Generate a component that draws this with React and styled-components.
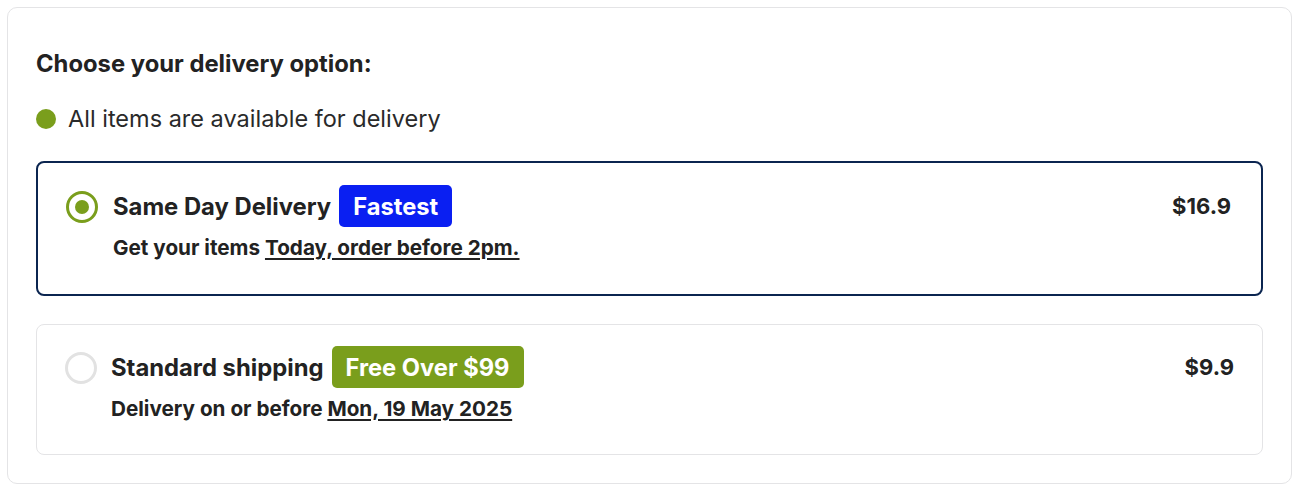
import React, { useState } from "react";
import styled, { createGlobalStyle } from "styled-components";

const Global = createGlobalStyle`
  html, body { margin: 0; padding: 0; background: #ffffff; }
  body { font-family: "Inter", "Lato", "Noto Sans", sans-serif; color: #222222; }
  * { box-sizing: border-box; }
`;

const Page = styled.div`
  padding: 7px 17px 7px 7px;
`;

const Panel = styled.section`
  border: 1px solid #e4e4e6;
  border-radius: 10px;
  padding: 43px 28px 28px 28px;
`;

const Heading = styled.h2`
  margin: 0;
  font-size: 23.8px;
  line-height: 26px;
  font-weight: 700;
  color: #222222;
`;

const Availability = styled.div`
  display: flex;
  align-items: center;
  gap: 12px;
  margin-top: 29px;
  font-size: 23.5px;
  line-height: 26px;
  font-weight: 400;
  color: #2a2a2a;
`;

const Dot = styled.span`
  width: 20px;
  height: 20px;
  border-radius: 50%;
  background: #7a9e1c;
  flex: none;
`;

const Options = styled.div`
  display: flex;
  flex-direction: column;
  gap: 28px;
  margin-top: 29px;
`;

const OptionCard = styled.label`
  display: grid;
  grid-template-columns: 32px 1fr auto;
  column-gap: ${(p) => (p.$selected ? 15 : 14)}px;
  align-items: start;
  border: ${(p) => (p.$selected ? "2px solid #0b2550" : "1px solid #e4e4e6")};
  border-radius: 8px;
  padding: ${(p) => (p.$selected ? "22px 30px 34px 28px" : "21px 28px 33px 28px")};
  cursor: pointer;
  background: #ffffff;
`;

const Radio = styled.span`
  width: 32px;
  height: 32px;
  margin-top: 6px;
  border-radius: 50%;
  border: 3px solid ${(p) => (p.$checked ? "#7a9e1c" : "#e2e2e2")};
  display: flex;
  align-items: center;
  justify-content: center;
  &::after {
    content: "";
    width: 14px;
    height: 14px;
    border-radius: 50%;
    background: #7a9e1c;
    display: ${(p) => (p.$checked ? "block" : "none")};
  }
`;

const Content = styled.div`
  display: flex;
  flex-direction: column;
  gap: 9px;
`;

const TitleRow = styled.div`
  display: flex;
  align-items: center;
  gap: 8px;
  height: 42px;
`;

const Title = styled.span`
  font-size: 23.8px;
  font-weight: 700;
  color: #222222;
`;

const Badge = styled.span`
  display: inline-flex;
  align-items: center;
  height: 42px;
  padding: 0 14px;
  border-radius: 5px;
  font-size: 23.7px;
  font-weight: 700;
  color: #ffffff;
  background: ${(p) => p.$bg};
`;

const Sub = styled.div`
  font-size: 20.7px;
  line-height: 24px;
  font-weight: 700;
  color: #222222;
`;

const Link = styled.span`
  text-decoration: underline;
  text-underline-offset: 3px;
  text-decoration-thickness: 2px;
`;

const Price = styled.span`
  font-size: 22px;
  font-weight: 700;
  line-height: 42px;
  color: #222222;
`;

const options = [
  {
    id: "same",
    title: "Same Day Delivery",
    badge: "Fastest",
    badgeBg: "#0a1ff2",
    lead: "Get your items ",
    link: "Today, order before 2pm.",
    price: "$16.9",
  },
  {
    id: "standard",
    title: "Standard shipping",
    badge: "Free Over $99",
    badgeBg: "#7a9e1c",
    lead: "Delivery on or before ",
    link: "Mon, 19 May 2025",
    price: "$9.9",
  },
];

export default function App() {
  const [selected, setSelected] = useState("same");
  return (
    <Page>
      <Global />
      <Panel>
        <Heading>Choose your delivery option:</Heading>
        <Availability>
          <Dot />
          All items are available for delivery
        </Availability>
        <Options>
          {options.map((o) => {
            const on = selected === o.id;
            return (
              <OptionCard key={o.id} $selected={on} onClick={() => setSelected(o.id)}>
                <Radio $checked={on} />
                <Content>
                  <TitleRow>
                    <Title>{o.title}</Title>
                    <Badge $bg={o.badgeBg}>{o.badge}</Badge>
                  </TitleRow>
                  <Sub>
                    {o.lead}
                    <Link>{o.link}</Link>
                  </Sub>
                </Content>
                <Price>{o.price}</Price>
              </OptionCard>
            );
          })}
        </Options>
      </Panel>
    </Page>
  );
}
